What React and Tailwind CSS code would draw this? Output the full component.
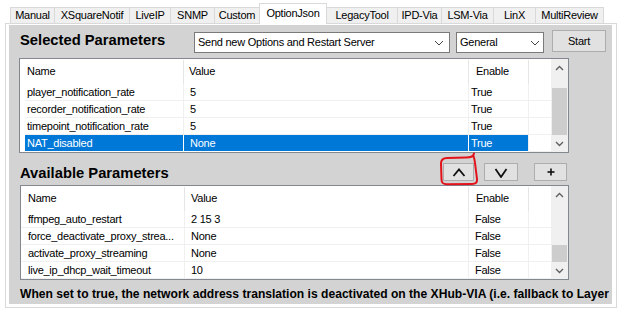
import React from "react";

const tabs = [
  { label: "Manual", w: "w-[44px]" },
  { label: "XSquareNotif", w: "w-[75px]" },
  { label: "LiveIP", w: "w-[41px]" },
  { label: "SNMP", w: "w-[44px]" },
  { label: "Custom", w: "w-[45px]" },
  { label: "OptionJson", w: "w-[68px]", active: true },
  { label: "LegacyTool", w: "w-[71px]" },
  { label: "IPD-Via", w: "w-[44px]" },
  { label: "LSM-Via", w: "w-[52px]" },
  { label: "LinX", w: "w-[42px]" },
  { label: "MultiReview", w: "w-[69px]", last: true },
];

function ScrollChevron({ up }) {
  return (
    <svg width="9" height="6" viewBox="0 0 9 6">
      <polyline
        points={up ? "1,5 4.5,1.5 8,5" : "1,1 4.5,4.5 8,1"}
        fill="none"
        stroke="#606060"
        strokeWidth="1.4"
      />
    </svg>
  );
}

function ComboChevron() {
  return (
    <svg width="10" height="6" viewBox="0 0 10 6">
      <polyline points="1,1 5,5 9,1" fill="none" stroke="#444" strokeWidth="1" />
    </svg>
  );
}

function Scrollbar({ thumb }) {
  return (
    <div className="w-[17px] h-full bg-[#f0f0f0] flex flex-col">
      <div className="h-[17px] flex items-center justify-center">
        <ScrollChevron up />
      </div>
      <div className="flex-1 flex flex-col justify-end">
        <div className={`${thumb} mx-px bg-[#cdcdcd]`} />
      </div>
      <div className="h-[17px] flex items-center justify-center">
        <ScrollChevron />
      </div>
    </div>
  );
}

function HeaderCell({ w, pl, label }) {
  return (
    <div className={`${w} h-full flex`}>
      <div className={`flex-1 flex items-center ${pl}`}>{label}</div>
      <div className="w-px mt-[1px] bg-[#e5e5e5]" />
    </div>
  );
}

function SelectedTable() {
  const rows = [
    ["player_notification_rate", "5", "True"],
    ["recorder_notification_rate", "5", "True"],
    ["timepoint_notification_rate", "5", "True"],
    ["NAT_disabled", "None", "True", true],
  ];
  return (
    <div className="ml-[10px] w-[550px] h-[95px] border border-[#828790] bg-white flex">
      <div className="flex-1 flex flex-col">
        <div className="h-[25px] flex">
          <HeaderCell w="w-[164px]" pl="pl-[7px]" label="Name" />
          <HeaderCell w="w-[285px]" pl="pl-[5px]" label="Value" />
          <HeaderCell w="w-[60px]" pl="pl-[7px]" label="Enable" />
          <div className="flex-1" />
        </div>
        {rows.map(([n, v, e, sel]) => (
          <div key={n} className="h-[17px] flex">
            <div className="w-[5px]" />
            <div className={`w-[159px] flex items-center pl-[2px] border-r border-b ${sel ? "bg-[#0078d7] text-white border-white" : "border-[#f0f0f0]"}`}>{n}</div>
            <div className={`w-[285px] flex items-center pl-[6px] border-r border-b ${sel ? "bg-[#0078d7] text-white border-white" : "border-[#f0f0f0]"}`}>{v}</div>
            <div className={`w-[60px] flex items-center pl-[2px] border-r border-b ${sel ? "bg-[#0078d7] text-white border-r-[#f0f0f0] border-b-white" : "border-[#f0f0f0]"}`}>{e}</div>
            <div className="flex-1 border-b border-[#f0f0f0]" />
          </div>
        ))}
      </div>
      <Scrollbar thumb="h-[47px]" />
    </div>
  );
}

function AvailableTable() {
  const rows = [
    ["ffmpeg_auto_restart", "2 15 3", "False"],
    ["force_deactivate_proxy_strea...", "None", "False"],
    ["activate_proxy_streaming", "None", "False"],
    ["live_ip_dhcp_wait_timeout", "10", "False"],
  ];
  return (
    <div className="ml-[11px] w-[549px] h-[95px] border border-[#828790] bg-white flex">
      <div className="flex-1 flex flex-col">
        <div className="h-[25px] flex">
          <HeaderCell w="w-[164px]" pl="pl-[7px]" label="Name" />
          <HeaderCell w="w-[284px]" pl="pl-[6px]" label="Value" />
          <HeaderCell w="w-[60px]" pl="pl-[7px]" label="Enable" />
          <div className="flex-1" />
        </div>
        {rows.map(([n, v, e]) => (
          <div key={n} className="h-[17px] flex">
            <div className="w-[164px] flex items-center pl-[7px] border-r border-b border-[#f0f0f0] whitespace-nowrap overflow-hidden">{n}</div>
            <div className="w-[284px] flex items-center pl-[6px] border-r border-b border-[#f0f0f0]">{v}</div>
            <div className="w-[60px] flex items-center pl-[6px] border-r border-b border-[#f0f0f0]">{e}</div>
            <div className="flex-1 border-b border-[#f0f0f0]" />
          </div>
        ))}
      </div>
      <Scrollbar thumb="h-[17px]" />
    </div>
  );
}

export default function App() {
  return (
    <div className="relative w-[620px] h-[310px] overflow-hidden bg-white text-black text-[11px] tracking-[-0.25px] font-['Liberation_Sans',Arial,sans-serif]">
      {/* Tab strip */}
      <div className="h-[23px] flex items-end pl-[10px]">
        {tabs.map((t) =>
          t.active ? (
            <div
              key={t.label}
              className={`${t.w} relative z-10 h-[21px] -mb-px -mr-px pb-[2px] bg-white border-l border-t border-r border-[#d9d9d9] flex items-center justify-center`}
            >
              {t.label}
            </div>
          ) : (
            <div
              key={t.label}
              className={`${t.w} h-[16px] bg-[#f0f0f0] border-l border-t ${t.last ? "border-r" : ""} border-[#d9d9d9] flex items-center justify-center`}
            >
              {t.label}
            </div>
          )
        )}
      </div>

      {/* Tab page */}
      <div className="ml-[5px] w-[612px] h-[285px] border border-[#d9d9d9] bg-white pt-[1px] pl-[3px] pr-[4px]">
        <div className="w-[603px] h-[279px] bg-[#d3d3d3] overflow-hidden flex flex-col">
          {/* Row 1 */}
          <div className="h-[28px] pt-[5px] pl-[11px] flex items-start">
            <div className="w-[174px] mt-[2px] text-[14.75px] leading-[17px] font-bold tracking-normal whitespace-nowrap">
              Selected Parameters
            </div>
            <div className="w-[256px] h-[21px] mt-[2px] bg-white border border-[#7a7a7a] flex items-center pl-[3px] pr-[5px]">
              <span className="flex-1 whitespace-nowrap">Send new Options and Restart Server</span>
              <ComboChevron />
            </div>
            <div className="ml-[6px] w-[88px] h-[21px] mt-[2px] bg-white border border-[#7a7a7a] flex items-center pl-[3px] pr-[3px]">
              <span className="flex-1">General</span>
              <ComboChevron />
            </div>
            <div className="ml-[8px] w-[54px] h-[22px] bg-[#e1e1e1] border border-[#adadad] flex items-center justify-center">
              Start
            </div>
          </div>

          <div className="mt-[5px]">
            <SelectedTable />
          </div>

          {/* Row 2 */}
          <div className="mt-[10px] h-[18px] pl-[11px] flex items-start">
            <div className="w-[423px] mt-[2px] text-[14.75px] leading-[17px] font-bold tracking-normal whitespace-nowrap">
              Available Parameters
            </div>
            <div className="w-[31px] h-[18px] bg-[#e1e1e1] border border-[#adadad] flex items-center justify-center pl-[1px]">
              <svg width="14" height="9" viewBox="0 0 14 9">
                <polyline points="1.5,8 7,1.5 12.5,8" fill="none" stroke="#111" strokeWidth="1.8" />
              </svg>
            </div>
            <div className="ml-[10px] w-[34px] h-[18px] bg-[#e1e1e1] border border-[#adadad] flex items-center justify-center pt-[1px]">
              <svg width="14" height="10" viewBox="0 0 14 10">
                <polyline points="1.5,1 7,9 12.5,1" fill="none" stroke="#111" strokeWidth="1.8" />
              </svg>
            </div>
            <div className="ml-[16px] w-[33px] h-[18px] bg-[#e1e1e1] border border-[#adadad] flex items-center justify-center">
              <svg width="8" height="8" viewBox="0 0 8 8">
                <line x1="4" y1="0.5" x2="4" y2="7.5" stroke="#111" strokeWidth="1.6" />
                <line x1="0.5" y1="4" x2="7.5" y2="4" stroke="#111" strokeWidth="1.6" />
              </svg>
            </div>
          </div>

          <div className="mt-[4px]">
            <AvailableTable />
          </div>

          <div className="mt-[7px] pl-[11px] text-[12.1px] leading-[14px] font-bold tracking-normal whitespace-nowrap">
            When set to true, the network address translation is deactivated on the XHub-VIA (i.e. fallback to Layer
          </div>
        </div>
      </div>

      {/* Red hand-drawn annotation */}
      <svg className="absolute left-0 top-0 pointer-events-none" width="620" height="310" viewBox="0 0 620 310">
        <path
          d="M474 153.5 C473.5 156.5 471 157.5 466 157.5 L447 158 C442.5 158.2 441 160 441 163.5 L441.5 179.5 C441.6 183 443 184.2 447 184.2 L472 184 C476 184 477.3 182.5 477 179 L475 163 C474.6 160 474.2 158 473.5 156"
          fill="none"
          stroke="#e3131b"
          strokeWidth="2"
          strokeLinecap="round"
          strokeLinejoin="round"
        />
      </svg>
    </div>
  );
}
